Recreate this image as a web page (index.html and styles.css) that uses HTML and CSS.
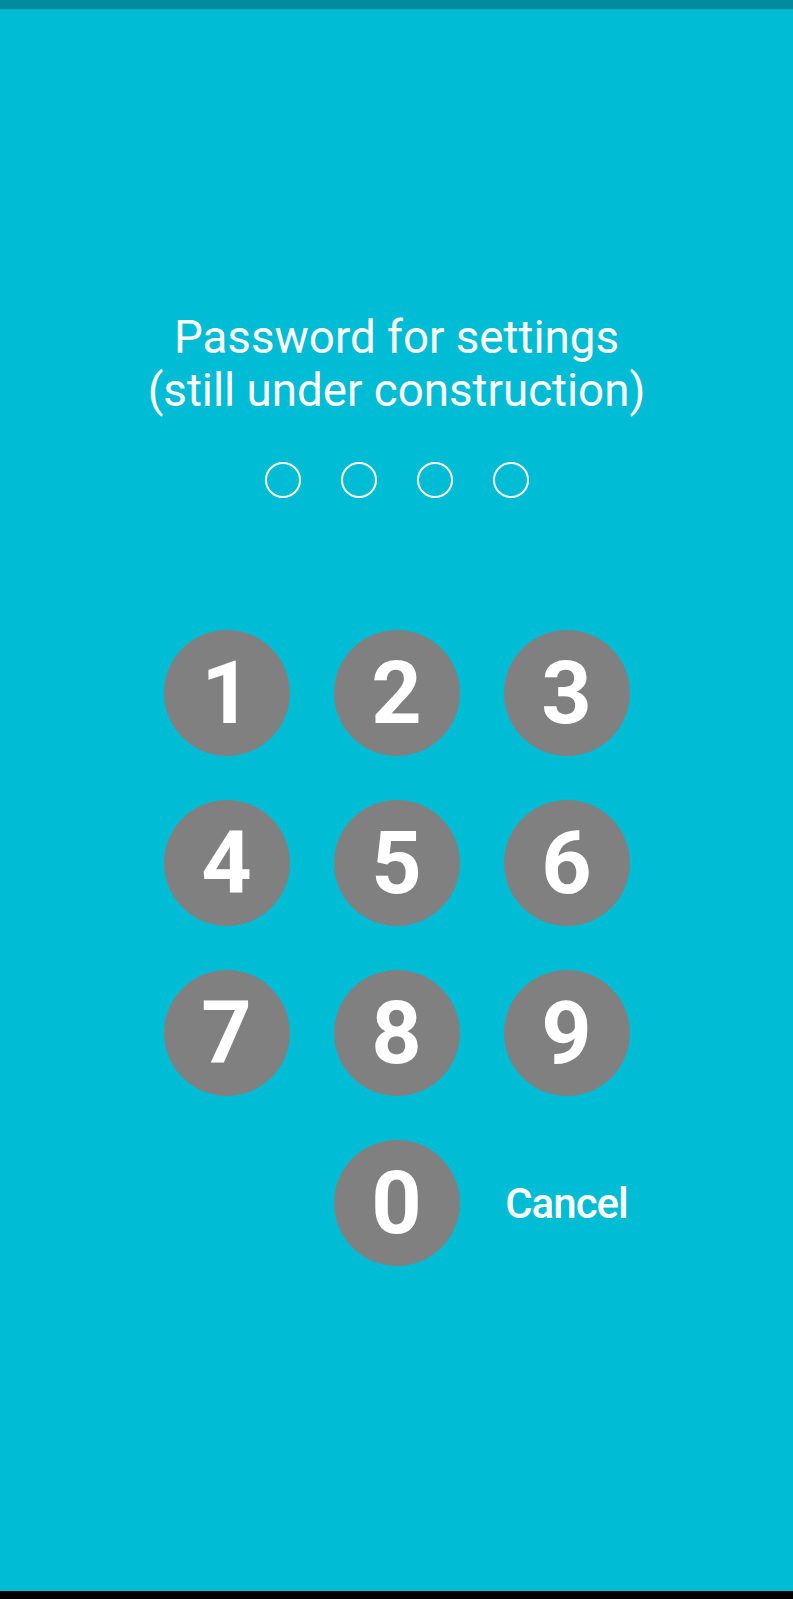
FILE: index.html
```html
<!DOCTYPE html>
<html lang="en">
<head>
<meta charset="utf-8">
<title>Password for settings</title>
<link rel="stylesheet" href="styles.css">
</head>
<body>
<div class="screen">
  <div class="status-bar"></div>
  <main class="content">
    <h1 class="title">Password for settings<br>(still under construction)</h1>
    <div class="dots">
      <span class="dot"></span>
      <span class="dot"></span>
      <span class="dot"></span>
      <span class="dot"></span>
    </div>
    <div class="keypad">
      <button class="key">1</button>
      <button class="key">2</button>
      <button class="key">3</button>
      <button class="key">4</button>
      <button class="key">5</button>
      <button class="key">6</button>
      <button class="key">7</button>
      <button class="key">8</button>
      <button class="key">9</button>
      <span class="key-empty"></span>
      <button class="key">0</button>
      <button class="cancel">Cancel</button>
    </div>
  </main>
  <div class="nav-bar"></div>
</div>
</body>
</html>
```

FILE: styles.css
```css
html, body {
  margin: 0;
  padding: 0;
}

body {
  font-family: Roboto, "Noto Sans", "Liberation Sans", sans-serif;
  background: #00bcd4;
}

.screen {
  height: 1599px;
  display: flex;
  flex-direction: column;
  background: #00bcd4;
}

.status-bar {
  height: 9px;
  background: #008b9f;
  border-bottom: 1px solid #00aec5;
  flex: none;
}

.content {
  flex: 1;
  display: flex;
  flex-direction: column;
  align-items: center;
  padding-top: 301px;
}

.title {
  margin: 0;
  color: #ffffff;
  font-weight: 400;
  font-size: 45.7px;
  line-height: 53px;
  text-align: center;
}

.dots {
  display: flex;
  gap: 40px;
  margin-top: 45px;
}

.dot {
  width: 32px;
  height: 32px;
  border: 2px solid #ffffff;
  border-radius: 50%;
  box-sizing: content-box;
}

.keypad {
  display: grid;
  grid-template-columns: repeat(3, 126px);
  grid-auto-rows: 126px;
  gap: 44px;
  margin-top: 132px;
}

.key {
  width: 126px;
  height: 126px;
  border: none;
  border-radius: 50%;
  background: #808080;
  color: #ffffff;
  font-family: Roboto, "Noto Sans", "Liberation Sans", sans-serif;
  font-weight: 700;
  font-size: 88px;
  line-height: 126px;
  padding: 0;
  display: flex;
  align-items: center;
  justify-content: center;
}

.cancel {
  border: none;
  background: transparent;
  color: #ffffff;
  font-family: Roboto, "Noto Sans", "Liberation Sans", sans-serif;
  font-weight: 500;
  font-size: 42px;
  letter-spacing: -1px;
  padding: 0;
  display: flex;
  align-items: center;
  justify-content: center;
}

.nav-bar {
  height: 8px;
  background: #000000;
  flex: none;
}
```
